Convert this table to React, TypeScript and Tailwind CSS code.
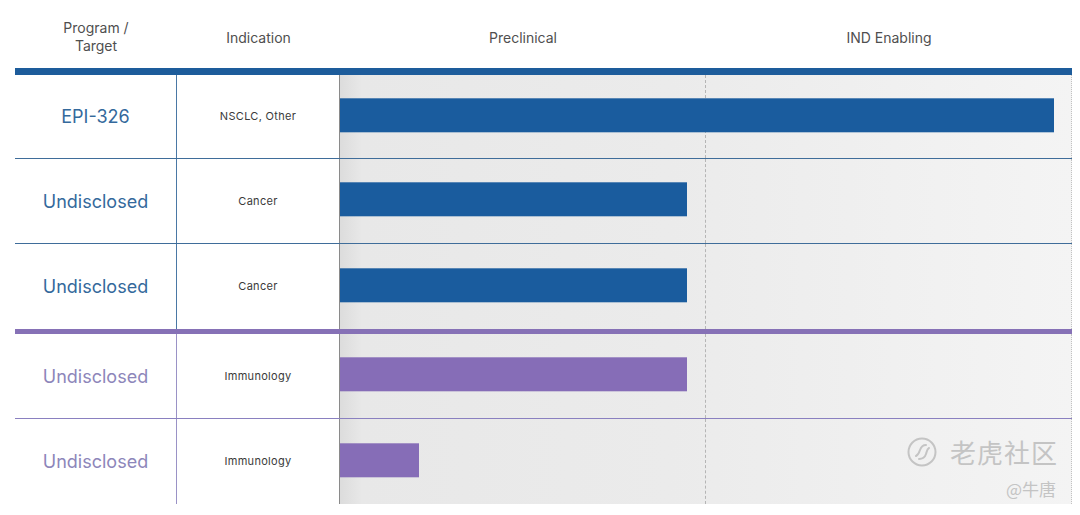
type Row = {
  name: string;
  indication: string;
  width: number;
  tone: "blue" | "purple";
};

const rows: Row[] = [
  { name: "EPI-326", indication: "NSCLC, Other", width: 714, tone: "blue" },
  { name: "Undisclosed", indication: "Cancer", width: 347, tone: "blue" },
  { name: "Undisclosed", indication: "Cancer", width: 347, tone: "blue" },
  { name: "Undisclosed", indication: "Immunology", width: 347, tone: "purple" },
  { name: "Undisclosed", indication: "Immunology", width: 79, tone: "purple" },
];

function TigerLogo() {
  return (
    <svg width="32" height="32" viewBox="0 0 32 32" fill="none" stroke="#c4c4c4" strokeWidth="2">
      <circle cx="16" cy="16" r="13.5" />
      <path d="M10 20c2-1 3-3 4-6s3-5 6-5" strokeLinecap="round" />
      <path d="M13 23c3 0 6-2 7-5s1-5 3-6" strokeLinecap="round" />
    </svg>
  );
}

function PipelineRow({ row, last, first }: { row: Row; last: boolean; first: boolean }) {
  const purple = row.tone === "purple";
  return (
    <div
      className={
        "flex " +
        (first ? "h-[84px] " : "h-[85px] ") +
        (last ? "" : purple ? "border-b border-[#8a80c0]" : "border-b border-[#3f6d9a]")
      }
    >
      <div
        className={
          "w-[162px] shrink-0 flex items-center justify-center text-[18px] border-r " +
          (purple ? "text-[#8d86ba] border-[#9a92c6]" : "text-[#34699c] border-[#4a78a5]")
        }
      >
        {row.name}
      </div>
      <div className="w-[163px] shrink-0 flex items-center justify-center text-[11px] tracking-[0.3px] text-[#3a3a3a] border-r border-[#8a8a8a]">
        {row.indication}
      </div>
      <div className="relative flex-1 flex bg-[linear-gradient(to_right,#dcdcdc,#e8e8e8_3%,#ebebeb_45%,#f4f4f4)]">
        <div className="w-[366px] border-r border-dashed border-[#b5b5b5]" />
        <div className="flex-1 border-r border-dotted border-[#c2c2c2]" />
        <div
          className={
            "absolute left-0 top-1/2 -translate-y-[55%] h-[34px] " +
            (purple ? "bg-[#866db7]" : "bg-[#1a5c9e]")
          }
          style={{ width: row.width }}
        />
      </div>
    </div>
  );
}

export default function App() {
  return (
    <div
      className="relative w-[1080px] h-[515px] bg-white pl-[15px] pr-[8px]"
      style={{ fontFamily: "Inter, 'Noto Sans', sans-serif" }}
    >
      <div className="flex h-[68px] items-center pt-[6px] text-[14px] text-[#4f4f4f]">
        <div className="w-[162px] text-center leading-[18px]">
          Program /
          <br />
          Target
        </div>
        <div className="w-[163px] text-center">Indication</div>
        <div className="w-[366px] text-center">Preclinical</div>
        <div className="flex-1 text-center">IND Enabling</div>
      </div>
      <div className="h-[7px] bg-[#1d5c9b]" />
      {rows.slice(0, 3).map((r, i) => (
        <PipelineRow key={i} row={r} first={i === 0} last={i === 2} />
      ))}
      <div className="h-[5px] bg-[#8671b6]" />
      {rows.slice(3).map((r, i) => (
        <PipelineRow key={i} row={r} first={false} last={i === 1} />
      ))}
      <div className="absolute left-[906px] top-[436px] flex flex-col items-end gap-[12px] text-[#c4c4c4]">
        <div className="flex items-center gap-[12px]">
          <TigerLogo />
          <span
            className="text-[26px] leading-none tracking-[1px]"
            style={{ fontFamily: "'Noto Sans CJK SC', sans-serif" }}
          >
            老虎社区
          </span>
        </div>
        <span
          className="text-[17px] leading-none pr-[2px]"
          style={{ fontFamily: "'Noto Sans CJK SC', sans-serif" }}
        >
          @牛唐
        </span>
      </div>
    </div>
  );
}
